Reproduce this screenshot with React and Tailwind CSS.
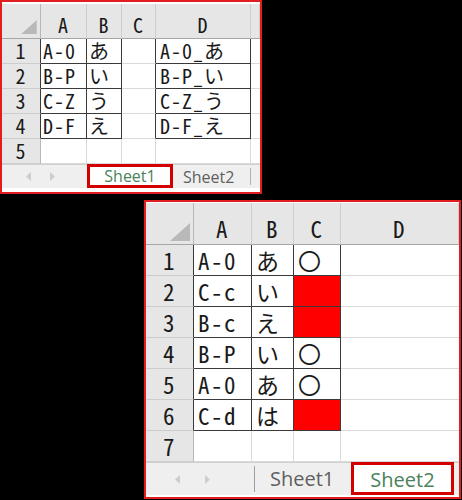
import clsx from 'clsx';

const CELL_FONT = "font-['Noto_Sans_CJK_JP',sans-serif] [font-feature-settings:'hwid']";
const TAB_FONT = "font-['Open_Sans','Noto_Sans',sans-serif]";

const topRows = [
  ['A-0', 'あ', '', 'A-0_あ'],
  ['B-P', 'い', '', 'B-P_い'],
  ['C-Z', 'う', '', 'C-Z_う'],
  ['D-F', 'え', '', 'D-F_え'],
  ['', '', '', ''],
];

// r = red fill
const bottomRows = [
  ['A-0', 'あ', '〇'],
  ['C-c', 'い', 'r'],
  ['B-c', 'え', 'r'],
  ['B-P', 'い', '〇'],
  ['A-0', 'あ', '〇'],
  ['C-d', 'は', 'r'],
  ['', '', ''],
];

function Corner({ size }) {
  return (
    <svg width={size} height={size - 2} viewBox="0 0 10 9">
      <polygon points="10,0 10,9 0,9" fill="#b9b9b9" />
    </svg>
  );
}

function Arrow({ dir }) {
  return (
    <svg width="5" height="9" viewBox="0 0 5 9">
      {dir === 'left' ? (
        <polygon points="5,0 5,9 0,4.5" fill="#cdcdcd" />
      ) : (
        <polygon points="0,0 0,9 5,4.5" fill="#cdcdcd" />
      )}
    </svg>
  );
}

function TopSheet() {
  return (
    <div className="w-[262px] h-[194px] border-2 border-[#e11d1d] bg-white flex flex-col">
      <div className="h-[2px] bg-white" />
      <div className={clsx('grid grid-cols-[39px_46px_35px_34px_95px_1fr] text-[20px] leading-[22px] tracking-[1px] text-[#1a1a1a]', CELL_FONT)}>
        {/* header */}
        <div className="h-[35px] bg-[#e6e6e6] border-r border-b border-r-[#b8b8b8] border-b-[#a6a6a6] flex items-end justify-end pr-[3px] pb-[4px]">
          <Corner size={16} />
        </div>
        {['A', 'B', 'C', 'D', ''].map((c, i) => (
          <div key={i} className="h-[35px] bg-[#e6e6e6] border-r border-b border-r-[#cdcdcd] border-b-[#a6a6a6] flex items-end justify-center pb-[2px]">
            {c}
          </div>
        ))}
        {topRows.map((row, r) => {
          const data = r < 4;
          return [
            <div key={'h' + r} className={clsx('h-[25px] bg-[#e6e6e6] border-r border-b border-b-[#cdcdcd] flex items-center justify-center', data ? 'border-r-[#3a3a3a]' : 'border-r-[#b8b8b8]')}>
              {r + 1}
            </div>,
            ...row.map((t, c) => (
              <div
                key={r + '-' + c}
                className={clsx(
                  'h-[25px] border-r border-b flex items-center whitespace-nowrap',
                  c === 3 ? 'pl-[4px]' : 'pl-[2px]',
                  data ? 'border-r-[#3a3a3a]' : 'border-r-[#dadada]',
                  data && c !== 2 ? 'border-b-[#3a3a3a]' : 'border-b-[#dadada]'
                )}
              >
                {t}
              </div>
            )),
            <div key={'e' + r} className="h-[25px] border-b border-b-[#dadada]" />,
          ];
        })}
      </div>
      <div className={clsx('h-[24px] bg-[#efefef] border-t border-[#d0d0d0] flex items-stretch text-[16px]', TAB_FONT)}>
        <div className="w-[85px] flex items-center gap-[19px] pl-[24px]">
          <Arrow dir="left" />
          <Arrow dir="right" />
        </div>
        <div className="w-[86px] -mt-[1px] border-[3px] border-[#d40000] bg-white flex items-center justify-center text-[#4a825a]">
          Sheet1
        </div>
        <div className="w-[77px] flex items-center pl-[10px] text-[#5f5f5f]">Sheet2</div>
        <div className="w-px my-[3px] bg-[#b0b0b0]" />
      </div>
      <div className="flex-1 bg-white" />
    </div>
  );
}

function BottomSheet() {
  return (
    <div className="ml-[144px] mt-[6px] w-[317px] h-[299px] border-2 border-[#e11d1d] bg-white flex flex-col">
      <div className="h-px bg-white" />
      <div className={clsx('grid grid-cols-[48px_58px_42px_47px_1fr] text-[23px] leading-[26px] tracking-[1.5px] text-[#1a1a1a]', CELL_FONT)}>
        <div className="h-[42px] bg-[#e6e6e6] border-r border-b border-r-[#b8b8b8] border-b-[#a6a6a6] flex items-end justify-end pr-[3px] pb-[3px]">
          <Corner size={20} />
        </div>
        {['A', 'B', 'C', 'D'].map((c, i) => (
          <div key={i} className="h-[42px] bg-[#e6e6e6] border-r border-b border-r-[#cdcdcd] border-b-[#a6a6a6] flex items-end justify-center pb-[3px]">
            {c}
          </div>
        ))}
        {bottomRows.map((row, r) => {
          const data = r < 6;
          return [
            <div key={'h' + r} className={clsx('h-[31px] bg-[#e6e6e6] border-r border-b border-b-[#cdcdcd] flex items-center justify-center', data ? 'border-r-[#3a3a3a]' : 'border-r-[#b8b8b8]')}>
              {r + 1}
            </div>,
            ...row.map((t, c) => (
              <div
                key={r + '-' + c}
                className={clsx(
                  'h-[31px] border-r border-b flex items-center whitespace-nowrap pl-[4px]',
                  data ? 'border-[#3a3a3a]' : 'border-[#dadada]',
                  t === 'r' && 'bg-[#ff0000]'
                )}
              >
                {t === 'r' ? '' : t}
              </div>
            )),
            <div key={'d' + r} className="h-[31px] border-b border-b-[#dadada]" />,
          ];
        })}
      </div>
      <div className={clsx('h-[33px] bg-[#efefef] border-t border-[#d0d0d0] flex items-stretch text-[20px]', TAB_FONT)}>
        <div className="w-[108px] flex items-center gap-[25px] pl-[29px]">
          <Arrow dir="left" />
          <Arrow dir="right" />
        </div>
        <div className="w-px my-[3px] bg-[#a0a0a0]" />
        <div className="w-[96px] flex items-center pl-[15px] text-[#5f5f5f]">Sheet1</div>
        <div className="w-[103px] -mt-[1px] border-[3px] border-[#d40000] bg-white flex flex-col">
          <div className="flex-1 flex items-center justify-center text-[#4a825a]">Sheet2</div>
          <div className="h-[2px] mx-[2px] bg-[#4a825a]" />
        </div>
      </div>
      <div className="flex-1 bg-white" />
    </div>
  );
}

export default function App() {
  return (
    <div className="w-[462px] h-[500px] bg-black overflow-hidden">
      <TopSheet />
      <BottomSheet />
    </div>
  );
}
